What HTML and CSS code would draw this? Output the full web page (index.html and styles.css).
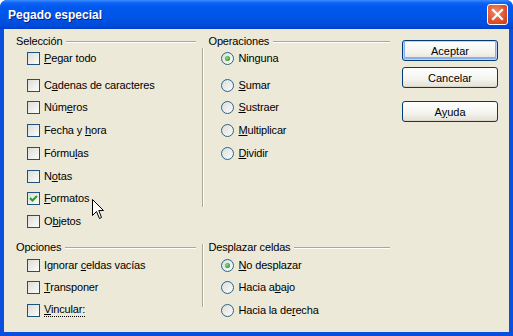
FILE: index.html
```html
<!DOCTYPE html>
<html lang="es">
<head>
    <meta charset="UTF-8">
    <title>Pegado especial</title>
    <link rel="stylesheet" href="styles.css">
</head>
<body>
    <div class="window">
        <div class="titlebar">
            <span class="title">Pegado especial</span>
            <span class="close-btn">
                <svg width="13" height="13" viewBox="0 0 13 13"><path d="M2 2 L11 11 M11 2 L2 11" stroke="#fff" stroke-width="2.2" stroke-linecap="square"/></svg>
            </span>
        </div>
        <div class="client">
            <div class="panes">
                <div class="section top">
                    <div class="group left">
                        <div class="group-title">Selección</div>
                        <label class="opt"><span class="box"></span><span><u>P</u>egar todo</span></label>
                        <label class="opt wide"><span class="box"></span><span>C<u>a</u>denas de caracteres</span></label>
                        <label class="opt near"><span class="box"></span><span>Núm<u>e</u>ros</span></label>
                        <label class="opt"><span class="box"></span><span>Fecha y <u>h</u>ora</span></label>
                        <label class="opt"><span class="box"></span><span>Fórmu<u>l</u>as</span></label>
                        <label class="opt"><span class="box"></span><span>N<u>o</u>tas</span></label>
                        <label class="opt near"><span class="box checked"><svg width="11" height="11" viewBox="0 0 11 11"><path d="M2 5 L4.5 7.5 L9 3" fill="none" stroke="#21a121" stroke-width="2"/></svg></span><span><u>F</u>ormatos</span></label>
                        <label class="opt"><span class="box"></span><span>O<u>b</u>jetos</span></label>
                    </div>
                    <div class="vsep"></div>
                    <div class="group right">
                        <div class="group-title">Operaciones</div>
                        <label class="opt"><span class="radio on"></span><span>Ninguna</span></label>
                        <label class="opt wide"><span class="radio"></span><span><u>S</u>umar</span></label>
                        <label class="opt near"><span class="radio"></span><span><u>S</u>ustraer</span></label>
                        <label class="opt"><span class="radio"></span><span><u>M</u>ultiplicar</span></label>
                        <label class="opt"><span class="radio"></span><span><u>D</u>ividir</span></label>
                    </div>
                </div>
                <div class="section bottom">
                    <div class="group left">
                        <div class="group-title">Opciones</div>
                        <label class="opt"><span class="box"></span><span>Ignorar <u>c</u>eldas vacías</span></label>
                        <label class="opt near"><span class="box"></span><span><u>T</u>ransponer</span></label>
                        <label class="opt"><span class="box"></span><span class="focus"><u>V</u>incular:</span></label>
                    </div>
                    <div class="vsep"></div>
                    <div class="group right">
                        <div class="group-title">Desplazar celdas</div>
                        <label class="opt"><span class="radio on"></span><span><u>N</u>o desplazar</span></label>
                        <label class="opt near"><span class="radio"></span><span>Hacia a<u>b</u>ajo</span></label>
                        <label class="opt"><span class="radio"></span><span>Hacia la de<u>r</u>echa</span></label>
                    </div>
                </div>
            </div>
            <div class="buttons">
                <button class="btn default">Aceptar</button>
                <button class="btn">Cancelar</button>
                <button class="btn help">A<u>y</u>uda</button>
            </div>
        </div>
        <svg class="cursor" width="13" height="21" viewBox="0 0 13 21">
            <path d="M0.5 0.5 L0.5 16.5 L4.5 12.5 L7.5 19.5 L9.5 18.5 L6.8 11.5 L11.5 11.5 Z" fill="#fff" stroke="#000" stroke-width="1"/>
        </svg>
    </div>
</body>
</html>
```

FILE: styles.css
```css
body {
    margin: 0;
    font-family: "Liberation Sans", Arial, sans-serif;
    font-size: 11px;
    letter-spacing: -0.15px;
    color: #000;
}
.window {
    position: relative;
    width: 513px;
    height: 336px;
    background: #0a4fdd;
    border-radius: 7px 7px 0 0;
    overflow: hidden;
}
.titlebar {
    height: 29px;
    display: flex;
    align-items: center;
    justify-content: space-between;
    padding: 0 5px 0 8px;
    background: linear-gradient(#3b8cff 0, #0d63f6 3px, #0058ee 7px, #0055e6 18px, #004ad8 26px, #003fc6 29px);
}
.title {
    color: #fff;
    font-weight: bold;
    font-size: 12px;
    letter-spacing: 0;
    text-shadow: 1px 1px 0 #0a1d83;
}
.close-btn {
    width: 21px;
    height: 21px;
    box-sizing: border-box;
    border: 1px solid #fff;
    border-radius: 3px;
    background: radial-gradient(circle at 40% 35%, #f08a6c, #e0502a 60%, #c73b16);
    display: flex;
    align-items: center;
    justify-content: center;
}
.client {
    height: 303px;
    margin: 0 4px;
    background: #ece9d8;
    display: flex;
    padding: 5px 11px 0 12px;
    box-sizing: border-box;
}
.panes {
    width: 374px;
}
.section {
    display: flex;
}
.section.bottom {
    margin-top: 11px;
}
.group.left {
    width: 180px;
}
.group.right {
    width: 182px;
}
.vsep {
    width: 0;
    border-left: 1px solid #aca899;
    border-right: 1px solid #fff;
    margin: 14px 5px 22px 6px;
}
.bottom .vsep {
    margin: 4px 5px 11px 6px;
}
.group-title {
    height: 14px;
    line-height: 14px;
    display: flex;
    align-items: center;
    gap: 4px;
    white-space: nowrap;
}
.group-title::after {
    content: "";
    flex: 1;
    border-top: 1px solid #aca899;
    border-bottom: 1px solid #fff;
    margin-top: 1px;
}
.opt {
    display: flex;
    align-items: center;
    height: 16px;
    margin-top: 7px;
    padding-left: 11px;
    gap: 4px;
    white-space: nowrap;
}
.right .opt {
    padding-left: 12px;
    gap: 5px;
}
.group-title + .opt {
    margin-top: 2px;
}
.opt.wide {
    margin-top: 11px;
}
.bottom .group-title + .opt {
    margin-top: 3px;
}
.opt.near {
    margin-top: 6px;
}
.box {
    width: 13px;
    height: 13px;
    box-sizing: border-box;
    border: 1px solid #1c5180;
    background: linear-gradient(135deg, #dcdcd7, #fcfcfb);
    display: flex;
    align-items: center;
    justify-content: center;
}
.radio {
    width: 13px;
    height: 13px;
    box-sizing: border-box;
    border: 1px solid #2c628b;
    border-radius: 50%;
    background: linear-gradient(135deg, #dcdcd7, #fcfcfb);
    display: flex;
    align-items: center;
    justify-content: center;
}
.radio.on::after {
    content: "";
    width: 5px;
    height: 5px;
    border-radius: 50%;
    background: radial-gradient(circle at 40% 40%, #8ee08e, #21a121 70%);
}
.focus {
    border-bottom: 1px dotted #000;
    line-height: 13px;
}
.buttons {
    margin-left: 12px;
    display: flex;
    flex-direction: column;
    padding-top: 6px;
}
.btn {
    width: 96px;
    height: 21px;
    box-sizing: border-box;
    border: 1px solid #003c74;
    border-radius: 3px;
    background: linear-gradient(#ffffff, #f4f3ee 60%, #e6e3d8 92%, #d6d0c5);
    font-family: "Liberation Sans", Arial, sans-serif;
    font-size: 11px;
    color: #000;
    padding: 0;
    margin-bottom: 6px;
}
.btn.default {
    box-shadow: inset 0 0 0 1px #bcd4f6, inset 0 -1px 0 2px #89adf0;
}
.btn.help {
    margin-top: 7px;
}
.cursor {
    position: absolute;
    left: 92px;
    top: 199px;
}
```
